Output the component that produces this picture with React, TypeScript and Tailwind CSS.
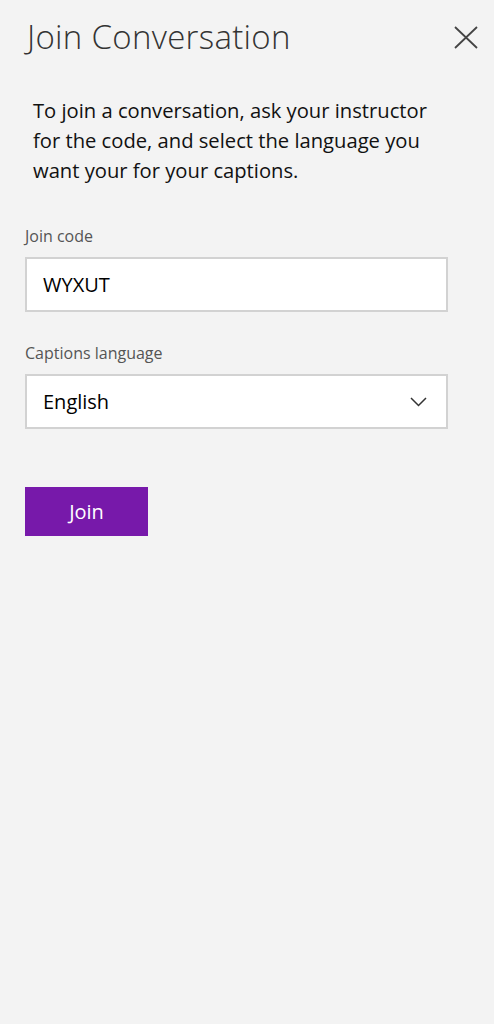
export default function App() {
  return (
    <div
      className="min-h-[1024px] w-full bg-[#f3f3f3] text-black"
      style={{ fontFamily: '"Segoe UI", "Open Sans", "Noto Sans", sans-serif' }}
    >
      <div className="flex items-start justify-between pl-[27px] pr-[16px] pt-[16px]">
        <h1 className="text-[33px] font-light leading-[42px] tracking-[0.3px] text-[#333333]">Join Conversation</h1>
        <button className="mt-[10px]" aria-label="Close">
          <svg width="24" height="23" viewBox="0 0 24 23" fill="none" stroke="#444" strokeWidth="1.8">
            <path d="M1 1L23 22M23 1L1 22" />
          </svg>
        </button>
      </div>

      <p className="mt-[37px] w-[445px] pl-[33px] text-[20.2px] leading-[30px] text-[#111]">
        To join a conversation, ask your instructor for the code, and select the language you want your for your captions.
      </p>

      <div className="mt-[40px] px-[25px]">
        <label className="block text-[16px] leading-[22px] text-[#555]">Join code</label>
        <div className="mt-[10px] flex h-[55px] w-[423px] items-center border-2 border-[#d2d2d2] bg-white pl-[16px] text-[20px]">
          WYXUT
        </div>

        <label className="mt-[30px] block text-[16px] leading-[22px] text-[#555]">Captions language</label>
        <div className="mt-[10px] flex h-[55px] w-[423px] items-center justify-between border-2 border-[#d2d2d2] bg-white pl-[16px] pr-[19px] text-[20px]">
          <span>English</span>
          <svg width="17" height="10" viewBox="0 0 17 10" fill="none" stroke="#333" strokeWidth="1.5">
            <path d="M1 1L8.5 8.5L16 1" />
          </svg>
        </div>

        <button className="mt-[58px] h-[49px] w-[123px] bg-[#7719aa] text-[20px] text-white">Join</button>
      </div>
    </div>
  );
}
